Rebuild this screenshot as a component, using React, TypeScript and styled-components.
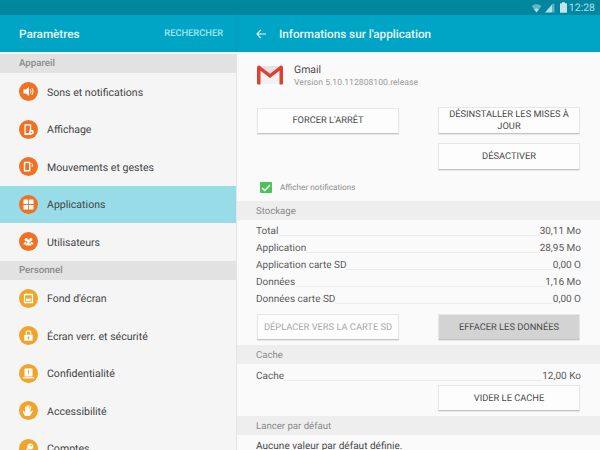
import { FC, ReactNode } from 'react';
import styled, { createGlobalStyle } from 'styled-components';

const GlobalStyle = createGlobalStyle`
  html, body {
    margin: 0;
    padding: 0;
    width: 600px;
    height: 450px;
    overflow: hidden;
    background: #fafafa;
    font-family: Roboto, "Liberation Sans", sans-serif;
    text-rendering: geometricPrecision;
  }
`;

const Screen = styled.div`
  width: 600px;
  height: 450px;
  display: flex;
  flex-direction: column;
  overflow: hidden;
`;

const StatusBar = styled.div`
  height: 15px;
  flex: none;
  background: #0087a0;
  display: flex;
  align-items: center;
  justify-content: flex-end;
  padding-right: 5px;
  color: #b5dde6;
`;

const StatusIcon = styled.svg<{ $gap?: number }>`
  display: block;
  flex: none;
  margin-left: ${(p) => p.$gap ?? 0}px;
`;

const Clock = styled.span`
  margin-left: 2px;
  font-size: 10.5px;
  line-height: 15px;
`;

const Columns = styled.div`
  flex: 1;
  display: flex;
  min-height: 0;
`;

const Sidebar = styled.div`
  width: 237px;
  flex: none;
  display: flex;
  flex-direction: column;
  overflow: hidden;
`;

const SideBody = styled.div`
  flex: 1;
  background: #f5f5f5;
  border-right: 1px solid #e4e4e4;
`;

const Main = styled.div`
  flex: 1;
  min-width: 0;
  background: #fafafa;
  overflow: hidden;
`;

const HeaderBar = styled.div`
  height: 37px;
  flex: none;
  background: #00a5c5;
  display: flex;
  align-items: center;
  color: #e8f7fa;
`;

const SideHeader = styled(HeaderBar)`
  justify-content: space-between;
  padding: 0 13px 0 19px;
  border-right: 1px solid #0098b6;
`;

const WhiteStrip = styled.div`
  height: 2px;
  flex: none;
  background: #fafafa;
`;

const MainHeader = styled(HeaderBar)`
  padding-left: 19px;
  gap: 13px;
`;

const HeaderTitle = styled.span`
  font-size: 11.7px;
  font-weight: 500;
`;

const SearchLink = styled.span`
  font-size: 9.3px;
  font-weight: 500;
  color: #a5e6ee;
`;

const SideSection = styled.div`
  height: 19px;
  box-sizing: border-box;
  background: #e2e2e2;
  color: #8a8a8a;
  font-size: 9.7px;
  line-height: 19px;
  padding: 0 0 0 19px;
  font-weight: 500;
`;

const SideRow = styled.div<{ $active?: boolean }>`
  height: 37.5px;
  display: flex;
  align-items: center;
  padding-left: 19px;
  gap: 9px;
  background: ${(p) => (p.$active ? '#98dce8' : 'transparent')};
`;

const IconDisc = styled.span<{ $color: string }>`
  width: 19px;
  height: 19px;
  flex: none;
  border-radius: 50%;
  background: ${(p) => p.$color};
  display: flex;
  align-items: center;
  justify-content: center;
`;

const RowLabel = styled.span`
  padding-top: 1px;
  font-size: 10.55px;
  color: #444;
`;

const AppInfo = styled.div`
  display: flex;
  align-items: flex-start;
  height: 55px;
  box-sizing: border-box;
  padding: 12px 0 0 20px;
  gap: 11px;
`;

const LogoMark = styled.svg`
  display: block;
  flex: none;
  margin-top: 1px;
`;

const AppName = styled.div`
  font-size: 10.5px;
  color: #4a4a4a;
  line-height: 12px;
`;

const AppVersion = styled.div`
  font-size: 8.65px;
  color: #9a9a9a;
  line-height: 14px;
`;

const ActionGrid = styled.div`
  display: grid;
  grid-template-columns: 142px 142px;
  justify-content: space-between;
  padding: 0 20px;
  row-gap: 9px;
  align-items: center;
`;

const ActionButton = styled.div<{ $disabled?: boolean; $pressed?: boolean; $tall?: boolean }>`
  height: ${(p) => (p.$tall ? 27 : 26)}px;
  box-sizing: border-box;
  display: flex;
  align-items: center;
  justify-content: center;
  text-align: center;
  padding: 1px 6px 0;
  background: ${(p) => (p.$pressed ? '#d3d3d3' : '#fdfdfd')};
  border: 1px solid #e6e6e6;
  border-bottom: 1px solid #c4c4c4;
  border-radius: 1px;
  box-shadow: 0 1px 1px rgba(0, 0, 0, 0.08);
  color: ${(p) => (p.$disabled ? '#a8a8a8' : '#4a4a4a')};
  font-size: 9.3px;
  line-height: 12px;
  white-space: ${(p) => (p.$tall ? 'normal' : 'nowrap')};
`;

const NotifyRow = styled.div`
  display: flex;
  align-items: center;
  height: 31px;
  box-sizing: border-box;
  padding: 4px 0 0 23px;
  gap: 8.5px;
  font-size: 8.2px;
  color: #8d8d8d;
`;

const Checkbox = styled.span`
  width: 11.5px;
  height: 11.5px;
  flex: none;
  background: #4cc35c;
  border-radius: 1px;
  display: flex;
  align-items: center;
  justify-content: center;
`;

const MainSection = styled.div`
  height: 19px;
  box-sizing: border-box;
  background: #eeeeee;
  color: #8a8a8a;
  font-size: 9.6px;
  line-height: 19px;
  padding: 1px 0 0 19px;
`;

const DataList = styled.div`
  padding: 2px 19px 0 19px;
`;

const DataRow = styled.div`
  height: 17px;
  display: flex;
  align-items: flex-end;
  font-size: 10px;
  color: #5a5a5a;
  line-height: 15px;
`;

const DataFill = styled.span`
  flex: 1;
  height: 2px;
  margin-bottom: 3px;
  border-bottom: 1px solid #ececec;
`;

const StorageActions = styled(ActionGrid)`
  margin-top: 7px;
  margin-bottom: 5px;
`;

const CacheList = styled(DataList)`
  padding-top: 3px;
`;

const CacheAction = styled.div`
  display: flex;
  justify-content: flex-end;
  padding: 1px 20px 5px 0;
`;

const CacheButton = styled(ActionButton)`
  width: 142px;
`;

const DefaultNote = styled.div`
  padding: 5px 0 0 19px;
  font-size: 10.05px;
  line-height: 14px;
  color: #4a4a4a;
`;

const ORANGE = '#ee7223';
const AMBER = '#f0a42c';

const Glyph: FC<{ children: ReactNode }> = ({ children }) => (
  <svg width="13" height="13" viewBox="0 0 13 13" fill="#fff">
    {children}
  </svg>
);

const sideItems: { label: string; color: string; active?: boolean; icon: ReactNode }[] = [
  {
    label: 'Sons et notifications',
    color: ORANGE,
    icon: (
      <>
        <path d="M1.5 4.6h2.2L7 2v9L3.7 8.4H1.5z" />
        <path d="M8.2 4.2c1 1.3 1 3.3 0 4.6M9.8 3c1.6 2 1.6 5 0 7" stroke="#fff" strokeWidth="1" fill="none" />
      </>
    ),
  },
  {
    label: 'Affichage',
    color: ORANGE,
    icon: (
      <>
        <path fillRule="evenodd" d="M3 1.2h5.6a.6.6 0 0 1 .6.6v9.6a.6.6 0 0 1-.6.6H3a.6.6 0 0 1-.6-.6V1.8a.6.6 0 0 1 .6-.6zM3.7 2.6v7.6h4.2V2.6z" />
        <circle cx="9.4" cy="9.2" r="2.4" />
        <circle cx="9.4" cy="9.2" r=".8" fill={ORANGE} />
      </>
    ),
  },
  {
    label: 'Mouvements et gestes',
    color: ORANGE,
    icon: (
      <>
        <path fillRule="evenodd" d="M2.4 1.8h5.4a.6.6 0 0 1 .6.6v8.6a.6.6 0 0 1-.6.6H2.4a.6.6 0 0 1-.6-.6V2.4a.6.6 0 0 1 .6-.6zM3.2 3.2v6.8h3.8V3.2z" />
        <path d="M9.6 3.4c.9.9.9 2.4.3 3.6" stroke="#fff" strokeWidth="1" fill="none" />
      </>
    ),
  },
  {
    label: 'Applications',
    color: ORANGE,
    active: true,
    icon: (
      <>
        <rect x="1.5" y="1.5" width="4.6" height="4.6" rx=".5" />
        <rect x="6.9" y="1.5" width="4.6" height="4.6" rx=".5" />
        <rect x="1.5" y="6.9" width="4.6" height="4.6" rx=".5" />
        <rect x="6.9" y="6.9" width="4.6" height="4.6" rx=".5" />
      </>
    ),
  },
  {
    label: 'Utilisateurs',
    color: ORANGE,
    icon: (
      <>
        <circle cx="4.2" cy="4.7" r="1.6" />
        <circle cx="8.8" cy="4.7" r="1.6" />
        <circle cx="6.5" cy="6.2" r="1.7" />
        <path d="M1.4 9.6c.2-1.8 1.4-2.6 2.6-2.6l.6.4-.9 2.2zM11.6 9.6c-.2-1.8-1.4-2.6-2.6-2.6l-.6.4.9 2.2zM3.6 10.4c.2-1.6 1.4-2.4 2.9-2.4s2.7.8 2.9 2.4z" />
      </>
    ),
  },
];

const personalItems: { label: string; color: string; icon: ReactNode }[] = [
  {
    label: "Fond d'écran",
    color: AMBER,
    icon: (
      <>
        <path fillRule="evenodd" d="M2.4 1.8h8.2a.5.5 0 0 1 .5.5v8.4a.5.5 0 0 1-.5.5H2.4a.5.5 0 0 1-.5-.5V2.3a.5.5 0 0 1 .5-.5zM3.2 3.2v6.6h6.6V3.2z" />
        <rect x="4.1" y="6.6" width="4.8" height="2.3" />
      </>
    ),
  },
  {
    label: 'Écran verr. et sécurité',
    color: AMBER,
    icon: (
      <>
        <path fillRule="evenodd" d="M2.8 5.8h7.4a.5.5 0 0 1 .5.5v5a.5.5 0 0 1-.5.5H2.8a.5.5 0 0 1-.5-.5v-5a.5.5 0 0 1 .5-.5zM6.5 7.6a1 1 0 0 0-.5 1.9v.9h1v-.9a1 1 0 0 0-.5-1.9z" />
        <path d="M4.2 5.8V4a2.3 2.3 0 0 1 4.6 0v1.8" stroke="#fff" strokeWidth="1.1" fill="none" />
      </>
    ),
  },
  {
    label: 'Confidentialité',
    color: AMBER,
    icon: (
      <>
        <path fillRule="evenodd" d="M3 1.5h7a.5.5 0 0 1 .5.5v7.4H2.5V2a.5.5 0 0 1 .5-.5zM6 3.2v2.9h1V3.2zM6 6.8v1h1v-1z" />
        <rect x="1" y="10.1" width="11" height="1.3" />
      </>
    ),
  },
  {
    label: 'Accessibilité',
    color: AMBER,
    icon: (
      <path d="M3.2 12C2 10.6 1 8.6.8 7.4c-.1-.7.7-.9 1.1-.3l1.2 1.6V3c0-.8 1-.8 1.1 0l.3 3V1.8c0-.8 1.2-.8 1.2 0L6 5.8l.4-4.2c.1-.8 1.2-.7 1.1.1L7.2 6l1-3.4c.2-.8 1.2-.5 1 .3L8.4 7.6c0 .5.2.7.5.4l1.1-1.3c.5-.6 1.3-.1.9.5L9.2 10c-.4.8-.8 1.4-1.2 2z" />
    ),
  },
  {
    label: 'Comptes',
    color: AMBER,
    icon: (
      <path fillRule="evenodd" d="M8.4 1.5a3 3 0 1 1-1.7 5.5L3.6 10.1v1.4H2v-1.6h1V9l.9-.1v-1L5.7 6A3 3 0 0 1 8.4 1.5zM9.2 3a.8.8 0 1 0 0 1.6.8.8 0 0 0 0-1.6z" />
    ),
  },
];

const storageRows = [
  ['Total', '30,11 Mo'],
  ['Application', '28,95 Mo'],
  ['Application carte SD', '0,00 O'],
  ['Données', '1,16 Mo'],
  ['Données carte SD', '0,00 O'],
];

const DataLine: FC<{ label: string; value: string }> = ({ label, value }) => (
  <DataRow>
    <span>{label}</span>
    <DataFill />
    <span>{value}</span>
  </DataRow>
);

const GmailLogo: FC = () => (
  <LogoMark width="26" height="20" viewBox="0 0 26 20">
    <path d="M1 1h24v18H1z" fill="#f1f1f1" />
    <path d="M3 1h20L13 8.8z" fill="#e4e4e4" />
    <path d="M0 2.5C0 .8 1.8 0 3 1L13 8.8 23 1c1.2-1 3-.2 3 1.5v16a1 1 0 0 1-1 1H22.5V5.8L13 13 3.5 5.8v13.7H1a1 1 0 0 1-1-1z" fill="#dd4034" />
  </LogoMark>
);

const App: FC = () => {
  return (
    <Screen>
      <GlobalStyle />
      <StatusBar>
        <StatusIcon width="11" height="10" viewBox="0 0 11 10" fill="#b5dde6">
          <path d="M5.5 9.6.6 3C3.4.6 7.6.6 10.4 3z" opacity="0.55" />
          <path d="M5.5 9.6 3 6.2c1.4-1 3.6-1 5 0z" />
        </StatusIcon>
        <StatusIcon $gap={3} width="10" height="10" viewBox="0 0 10 10" fill="#b5dde6">
          <path d="M0 9.5 7 1.5v8z" />
          <path d="M7 .8h2.5v8.7H7z" opacity="0.5" />
        </StatusIcon>
        <StatusIcon $gap={5} width="7" height="11" viewBox="0 0 7 11" fill="#c4e4eb">
          <path d="M2 .3h3v1h1.5a.5.5 0 0 1 .5.5v8.4a.5.5 0 0 1-.5.5H.5a.5.5 0 0 1-.5-.5V1.8a.5.5 0 0 1 .5-.5H2z" />
        </StatusIcon>
        <Clock>12:28</Clock>
      </StatusBar>
      <Columns>
        <Sidebar>
          <SideHeader>
            <HeaderTitle>Paramètres</HeaderTitle>
            <SearchLink>RECHERCHER</SearchLink>
          </SideHeader>
          <WhiteStrip />
          <SideBody>
            <SideSection>Appareil</SideSection>
            {sideItems.map((item) => (
              <SideRow key={item.label} $active={item.active}>
                <IconDisc $color={item.color}>
                  <Glyph>{item.icon}</Glyph>
                </IconDisc>
                <RowLabel>{item.label}</RowLabel>
              </SideRow>
            ))}
            <SideSection>Personnel</SideSection>
            {personalItems.map((item) => (
              <SideRow key={item.label}>
                <IconDisc $color={item.color}>
                  <Glyph>{item.icon}</Glyph>
                </IconDisc>
                <RowLabel>{item.label}</RowLabel>
              </SideRow>
            ))}
          </SideBody>
        </Sidebar>
        <Main>
          <MainHeader>
            <svg width="10" height="10" viewBox="0 0 10 10" fill="none" stroke="#e8f7fa" strokeWidth="1.2">
              <path d="M10 5H1M4.8 1 1 5l3.8 4" />
            </svg>
            <HeaderTitle>Informations sur l'application</HeaderTitle>
          </MainHeader>
          <AppInfo>
            <GmailLogo />
            <div>
              <AppName>Gmail</AppName>
              <AppVersion>Version 5.10.112808100.release</AppVersion>
            </div>
          </AppInfo>
          <ActionGrid>
            <ActionButton>FORCER L'ARRÊT</ActionButton>
            <ActionButton $tall>DÉSINSTALLER LES MISES À JOUR</ActionButton>
            <span />
            <ActionButton $tall>DÉSACTIVER</ActionButton>
          </ActionGrid>
          <NotifyRow>
            <Checkbox>
              <svg width="10" height="8" viewBox="0 0 10 8" fill="none" stroke="#fff" strokeWidth="1.4">
                <path d="M1 4l2.8 2.6L9 1" />
              </svg>
            </Checkbox>
            Afficher notifications
          </NotifyRow>
          <MainSection>Stockage</MainSection>
          <DataList>
            {storageRows.map(([label, value]) => (
              <DataLine key={label} label={label} value={value} />
            ))}
          </DataList>
          <StorageActions>
            <ActionButton $disabled>DÉPLACER VERS LA CARTE SD</ActionButton>
            <ActionButton $pressed>EFFACER LES DONNÉES</ActionButton>
          </StorageActions>
          <MainSection>Cache</MainSection>
          <CacheList>
            <DataLine label="Cache" value="12,00 Ko" />
          </CacheList>
          <CacheAction>
            <CacheButton>VIDER LE CACHE</CacheButton>
          </CacheAction>
          <MainSection>Lancer par défaut</MainSection>
          <DefaultNote>Aucune valeur par défaut définie.</DefaultNote>
        </Main>
      </Columns>
    </Screen>
  );
};

export default App;
